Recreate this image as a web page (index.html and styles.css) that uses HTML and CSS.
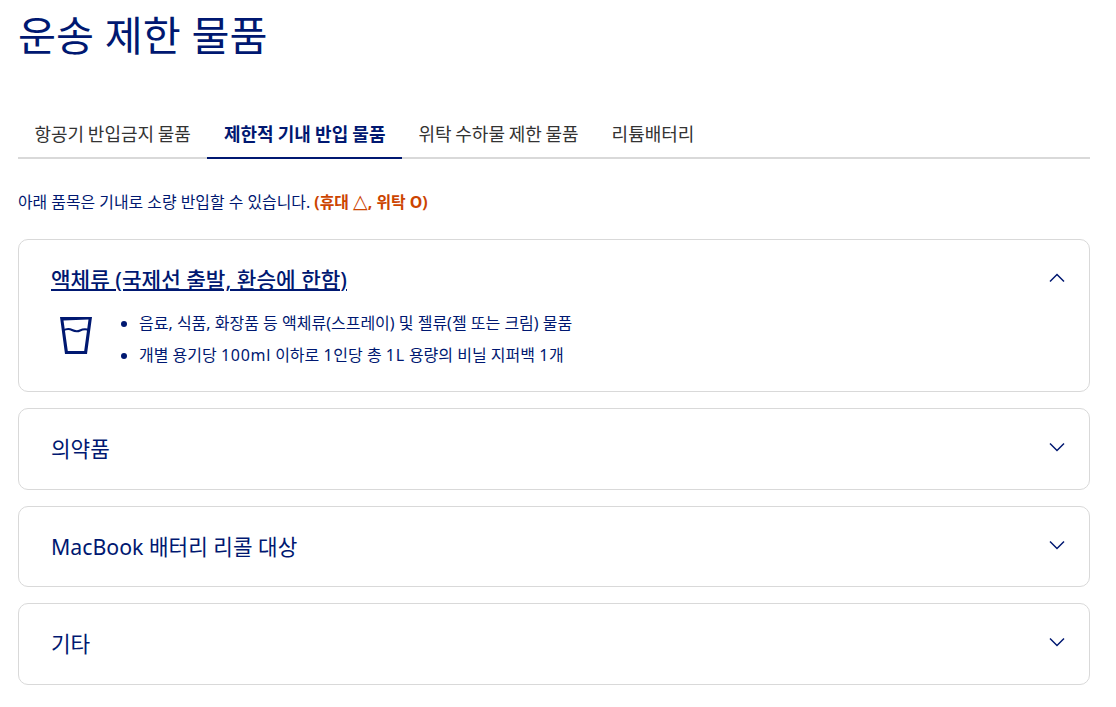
FILE: index.html
```html
<!DOCTYPE HTML>
<html lang="ko">
<head>
	<meta charset="UTF-8">
	<title>운송 제한 물품</title>
	<link rel="stylesheet" href="styles.css">
</head>
<body>
	<h1 class="title">운송 제한 물품</h1>
	<ul class="tabs">
		<li class="tab">항공기 반입금지 물품</li>
		<li class="tab tab-active">제한적 기내 반입 물품</li>
		<li class="tab">위탁 수하물 제한 물품</li>
		<li class="tab">리튬배터리</li>
	</ul>
	<p class="intro">아래 품목은 기내로 소량 반입할 수 있습니다. <strong class="note">(휴대 <span class="tri">△</span>, 위탁 O)</strong></p>

	<section class="card card-open">
		<div class="card-head">
			<h2 class="card-title card-title-open">액체류 (국제선 출발, 환승에 한함)</h2>
			<svg class="chevron" viewBox="0 0 16 10"><path d="M1 8.500 8 1.500l7 7"/></svg>
		</div>
		<div class="card-body">
			<svg class="cup" viewBox="0 0 32 37">
				<path class="cup-glass" d="M0 0H32L27 37H5ZM3.500 3.500 7.800 34H24.200L28.500 2.500Z"/>
				<path class="cup-water" d="M3 13.500c4-2 6-2 9-.5s5 2 8 .5 5-2 9-.5"/>
			</svg>
			<ul class="rules">
				<li>음료, 식품, 화장품 등 액체류(스프레이) 및 젤류(젤 또는 크림) 물품</li>
				<li>개별 용기당 <span class="num">100ml</span> 이하로 <span class="num">1</span>인당 총 <span class="num">1L</span> 용량의 비닐 지퍼백 <span class="num">1</span>개</li>
			</ul>
		</div>
	</section>

	<section class="card">
		<div class="card-head">
			<h2 class="card-title">의약품</h2>
			<svg class="chevron" viewBox="0 0 16 10"><path d="M1 1.500 8 8.500l7-7"/></svg>
		</div>
	</section>

	<section class="card">
		<div class="card-head">
			<h2 class="card-title">MacBook 배터리 리콜 대상</h2>
			<svg class="chevron" viewBox="0 0 16 10"><path d="M1 1.500 8 8.500l7-7"/></svg>
		</div>
	</section>

	<section class="card">
		<div class="card-head">
			<h2 class="card-title">기타</h2>
			<svg class="chevron" viewBox="0 0 16 10"><path d="M1 1.500 8 8.500l7-7"/></svg>
		</div>
	</section>
</body>
</html>
```

FILE: styles.css
```css
body
{
	margin: 0;
	padding: 0 26px 0 18px;
	font-family: "Noto Sans", "Noto Sans CJK KR", sans-serif;
	color: #001871;
	background: #fff;
}

.title
{
	margin: 0;
	padding-top: 7px;
	height: 109px;
	box-sizing: border-box;
	font-size: 41.300px;
	line-height: 56px;
	font-weight: 400;
}

.tabs
{
	display: flex;
	margin: 0;
	padding: 0;
	height: 50px;
	box-sizing: border-box;
	list-style: none;
	border-bottom: 2px solid #d9d9d9;
}

.tab
{
	height: 50px;
	box-sizing: border-box;
	padding: 0 16.500px;
	font-size: 18px;
	line-height: 50px;
	word-spacing: -1px;
	color: #333;
}

.tab-active
{
	font-weight: 700;
	word-spacing: -0.500px;
	color: #001871;
	border-bottom: 2px solid #001871;
}

.intro
{
	margin: 0;
	padding-top: 32px;
	height: 80px;
	box-sizing: border-box;
	font-size: 15.900px;
	line-height: 22px;
}

.note
{
	color: #cc4400;
}

.tri
{
	font-family: "DejaVu Sans", sans-serif;
	font-size: 19px;
	line-height: 1;
}

.card
{
	height: 81.600px;
	box-sizing: border-box;
	margin-bottom: 16px;
	border: 1px solid #d9d9d9;
	border-radius: 10px;
	padding: 0 24px 0 32px;
}

.card-open
{
	height: 153px;
}

.card-head
{
	display: flex;
	justify-content: space-between;
	align-items: center;
	height: 80px;
}

.card-title
{
	margin: 0;
	font-size: 21.300px;
	line-height: 30px;
	font-weight: 400;
}

.card-title-open
{
	font-weight: 500;
	text-decoration: underline;
	text-decoration-thickness: 2px;
}

.chevron
{
	width: 16px;
	height: 10px;
	margin-top: -4px;
	fill: none;
	stroke: #001871;
	stroke-width: 1.500;
}

.card-body
{
	display: flex;
	margin-top: -14px;
}

.cup
{
	width: 32px;
	height: 37px;
	margin: 11px 0 0 9px;
}

.cup-glass
{
	fill: #001871;
	fill-rule: evenodd;
}

.cup-water
{
	fill: none;
	stroke: #001871;
	stroke-width: 2;
}

.rules
{
	margin: 0;
	padding: 1px 0 0 47px;
	font-size: 16px;
	line-height: 32px;
}

.num
{
	letter-spacing: 0.700px;
}
```
